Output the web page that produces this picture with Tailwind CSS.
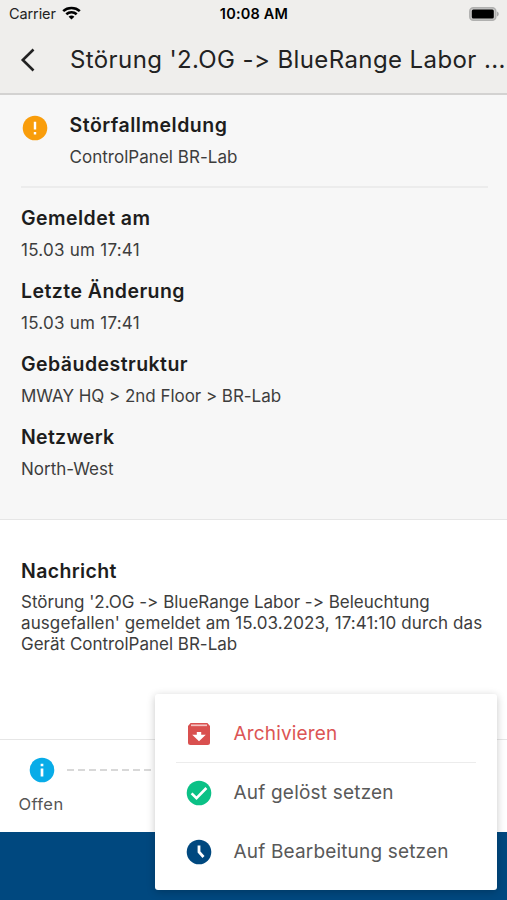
<!DOCTYPE html>
<html lang="de">
<head>
<meta charset="utf-8">
<title>Störung</title>
<script src="https://cdn.jsdelivr.net/npm/@tailwindcss/browser@4"></script>
</head>
<body class="relative flex h-[900px] w-[507px] flex-col overflow-hidden bg-white font-['Inter',sans-serif] text-[17px] leading-[21px] text-[#3d3d3d] [font-feature-settings:'calt'_0]">
  <header class="h-[95px] shrink-0 border-b-2 border-[#d3d2d1] bg-[#efeeec] text-[#222]">
    <div class="grid h-7 grid-cols-[1fr_auto_1fr] items-center pr-2 pl-[9px] text-[14.5px] leading-7">
      <div class="flex items-center gap-1.5">
        <span class="tracking-[-0.1px]">Carrier</span>
        <svg class="h-[14px] w-[19px] -translate-y-px" viewBox="0 0 19 14" fill="none" stroke="#000" stroke-width="2.6"><path d="M1.200 5.100C5.800.9 13.200.9 17.800 5.100M4.300 8.300c3-2.700 7.400-2.700 10.400 0"/><path d="M6.600 10.700c1.700-1.500 4.100-1.500 5.800 0L9.500 13.600z" fill="#000" stroke="none"/></svg>
      </div>
      <span class="font-semibold tracking-[0.2px] text-black">10:08 AM</span>
      <svg class="h-[14px] w-[30px] justify-self-end" viewBox="0 0 30 14"><rect x=".8" y=".8" width="26" height="12.400" rx="3.500" fill="#c9c8c7" stroke="#b0b0af" stroke-width="1.500"/><rect x="2.800" y="2.500" width="22" height="9" rx="1.500" fill="#000"/><path d="M28 4.500q1.800.8 1.800 2.500T28 9.500z" fill="#aaa"/></svg>
    </div>
    <div class="flex h-[64px] items-center pl-[20px]">
      <svg class="mr-[33px] h-6 w-[17px] shrink-0" viewBox="0 0 17 24" fill="none" stroke="#222" stroke-width="2.600"><path d="M13.500 1.500 2.800 12l10.700 10.500"/></svg>
      <h1 class="text-[24px] leading-8 font-normal tracking-[0.4px] whitespace-nowrap">Störung '2.OG -&gt; BlueRange Labor ...</h1>
    </div>
  </header>

  <section class="h-[425px] shrink-0 border-b border-[#e6e6e6] bg-[#f7f7f7] px-[21px] pt-[18px]">
    <div class="-mr-[2px] flex h-[75px] gap-[21.5px] border-b-2 border-[#ececec] pl-px">
      <svg class="mt-[2px] size-[26px] shrink-0" viewBox="0 0 26 26"><circle cx="13" cy="13" r="12.300" fill="#f99d0b"/><path d="M13 6.800v7.800M13 17v2.400" stroke="#fff" stroke-width="2.400"/></svg>
      <div>
        <h2 class="text-[19.5px] leading-6 font-semibold tracking-[0.5px] text-[#1d1d1d]">Störfallmeldung</h2>
        <p class="mt-[10px] tracking-[0.03px]">ControlPanel BR-Lab</p>
      </div>
    </div>
    <dl class="mt-[17.500px] grid auto-rows-[73.3px]">
      <div><dt class="text-[19.5px] leading-6 font-semibold tracking-[0.45px] text-[#1d1d1d]">Gemeldet am</dt><dd class="mt-[10px] tracking-[0.25px]">15.03 um 17:41</dd></div>
      <div><dt class="text-[19.5px] leading-6 font-semibold tracking-[0.45px] text-[#1d1d1d]">Letzte Änderung</dt><dd class="mt-[10px] tracking-[0.25px]">15.03 um 17:41</dd></div>
      <div><dt class="text-[19.5px] leading-6 font-semibold tracking-[0.45px] text-[#1d1d1d]">Gebäudestruktur</dt><dd class="mt-[10px] tracking-[-0.04px]">MWAY HQ &gt; 2nd Floor &gt; BR-Lab</dd></div>
      <div><dt class="text-[19.5px] leading-6 font-semibold tracking-[0.3px] text-[#1d1d1d]">Netzwerk</dt><dd class="mt-[10px]">North-West</dd></div>
    </dl>
  </section>

  <section class="h-[219px] shrink-0 px-[21px] pt-[39px]">
    <h2 class="text-[19.5px] leading-6 font-semibold tracking-[0.35px] text-[#1d1d1d]">Nachricht</h2>
    <p class="mt-[9px] whitespace-nowrap">Störung '2.OG -&gt; BlueRange Labor -&gt; Beleuchtung<br><span class="tracking-[0.1px]">ausgefallen' gemeldet am 15.03.2023, 17:41:10 durch das</span><br>Gerät ControlPanel BR-Lab</p>
  </section>

  <section class="flex h-[93px] shrink-0 border-t border-[#e6e6e6] pt-[17px] pl-[18px]">
    <div class="flex w-[48px] flex-col items-center">
      <svg class="size-[26px]" viewBox="0 0 26 26"><circle cx="13" cy="13" r="12.300" fill="#08ace8"/><path d="M13 11.500v8M13 6.800v2.500" stroke="#fff" stroke-width="2.700"/></svg>
      <span class="mt-[11px] mr-[2px] text-[16.5px] tracking-[0.4px] text-[#555]">Offen</span>
    </div>
    <svg class="mt-[12px] h-[2px] w-[100px]" viewBox="0 0 100 2"><path d="M1 1h99" stroke="#ccc" stroke-width="1.500" stroke-dasharray="7 4"/></svg>
  </section>
  <footer class="min-h-0 flex-1 bg-[#00487f]"></footer>

  <div class="absolute top-[694px] left-[155px] h-[196px] w-[342px] rounded-[3px] bg-white px-[21px] pt-[10px] text-[19px] leading-6 text-[#595959] shadow-[0_2px_9px_rgba(0,0,0,0.22)]">
    <div class="flex h-[59px] items-center gap-[21.5px] border-b border-[#ececec] pt-px pl-[10px] text-[#dc5555]">
      <svg class="size-[26px] shrink-0" viewBox="0 0 26 26"><path d="M4.600 2h16.800L24 5v16.500a2.500 2.500 0 0 1-2.500 2.500h-17A2.500 2.500 0 0 1 2 21.500V5z" fill="#d9504f"/><path d="M5 4.300h16" stroke="#f5c4c3" stroke-width="1.700"/><path d="M10.800 11h4.400v2.800h4.600L13 20.300l-6.800-6.500h4.600z" fill="#fff"/></svg>
      <span class="tracking-[0.15px]">Archivieren</span>
    </div>
    <div class="flex h-[60px] items-center gap-[21.5px] pl-[10px]">
      <svg class="size-[26px] shrink-0" viewBox="0 0 26 26"><circle cx="13" cy="13" r="12.300" fill="#0bc186"/><path d="m5.600 13.300 4.900 4.900 9.900-10.200" fill="none" stroke="#fff" stroke-width="2.600"/></svg>
      <span class="tracking-[0.2px]">Auf gelöst setzen</span>
    </div>
    <div class="flex h-[58px] items-center gap-[21.5px] pl-[10px]">
      <svg class="size-[26px] shrink-0" viewBox="0 0 26 26"><circle cx="13" cy="13" r="12.300" fill="#00487f"/><path d="M13 6.500V13l4.500 5" fill="none" stroke="#fff" stroke-width="2.800"/></svg>
      <span class="tracking-[0.17px]">Auf Bearbeitung setzen</span>
    </div>
  </div>
</body>
</html>
